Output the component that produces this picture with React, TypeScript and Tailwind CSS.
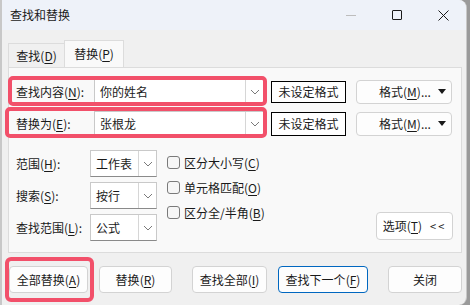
import React from 'react';

const font = { fontFamily: '"Noto Sans CJK SC", "Noto Sans", sans-serif' };

const Key = ({ k }: { k: string }) => (
  <>
    (<span className="underline underline-offset-2">{k}</span>)
  </>
);

const Chevron = () => (
  <svg width="10" height="6" viewBox="0 0 10 6" fill="none" stroke="#7a7a7a" strokeWidth="1">
    <path d="M1 1l4 4 4-4" />
  </svg>
);

const Combo = ({ value, w, h }: { value: string; w: string; h: string }) => (
  <div className={`flex ${w} ${h} border border-[#c9c9c9] border-b-[#8a8a8a] bg-white`}>
    <div className="flex flex-1 items-center pl-[5px] text-[12px]">{value}</div>
    <div className="flex w-[18px] items-center justify-center border-l border-[#d6d6d6]">
      <Chevron />
    </div>
  </div>
);

const Btn = ({ children, w, primary }: { children: React.ReactNode; w: string; primary?: boolean }) => (
  <div
    className={`flex ${w} h-[27px] items-center justify-center rounded-[4px] border bg-[#fdfdfd] text-[12px] ${
      primary ? 'border-[#0067c0]' : 'border-[#d3d3d3]'
    }`}
  >
    {children}
  </div>
);

const FormatBtn = () => (
  <div className="flex h-[24px] w-[96px] items-center justify-between rounded-[4px] border border-[#d3d3d3] bg-[#fdfdfd] pl-[22px] pr-[5px] text-[12px]">
    <span>
      格式<Key k="M" />...
    </span>
    <svg width="8" height="5" viewBox="0 0 8 5">
      <path d="M0 0h8L4 5z" fill="#1a1a1a" />
    </svg>
  </div>
);

const Check = ({ label }: { label: React.ReactNode }) => (
  <div className="flex h-[25px] items-center gap-[4px] text-[12px]">
    <div className="h-[13px] w-[13px] rounded-[3px] border border-[#7a7a7a] bg-[#f6f6f6]" />
    <span>{label}</span>
  </div>
);

export default function App() {
  return (
    <div className="relative flex h-[305px] w-[470px] bg-[#9a9a9a] text-[#1a1a1a]" style={font}>
      <div className="flex h-[305px] w-[467px] flex-col overflow-hidden rounded-r-[8px] border-l-2 border-r border-[#c8c8c8] bg-[#f0f0f0]">
        {/* title bar */}
        <div className="flex h-[30px] items-center bg-[#eef2f9] pl-[8px]">
          <span className="text-[12px]">查找和替换</span>
          <div className="ml-auto flex items-center">
            <div className="flex w-[46px] justify-center">
              <div className="h-px w-[10px] bg-[#bdbdbd]" />
            </div>
            <div className="flex w-[46px] justify-center">
              <div className="h-[10px] w-[10px] rounded-[1px] border border-[#1a1a1a]" />
            </div>
            <div className="flex w-[46px] justify-center">
              <svg width="11" height="11" viewBox="0 0 11 11" stroke="#1a1a1a" strokeWidth="1">
                <path d="M0.5 0.5l10 10M10.5 0.5l-10 10" />
              </svg>
            </div>
          </div>
        </div>

        {/* tabs */}
        <div className="flex h-[37px] items-end pl-[6px]">
          <div className="flex h-[24px] w-[56px] items-center justify-center border-l border-t border-[#dcdcdc] text-[12px]">
            查找<Key k="D" />
          </div>
          <div className="flex h-[27px] w-[60px] items-center justify-center border-x border-t border-[#dcdcdc] bg-[#f9f9f9] text-[12px]">
            替换<Key k="P" />
          </div>
        </div>

        {/* panel */}
        <div className="ml-[6px] mr-[4px] flex h-[186px] flex-col border border-[#dcdcdc] bg-[#f9f9f9] pl-[7px] pt-[11px]">
          <div className="flex h-[25px] items-center">
            <span className="w-[78px] text-[12px]">
              查找内容<Key k="N" />:
            </span>
            <Combo value="你的姓名" w="w-[170px]" h="h-[25px]" />
            <div className="ml-[7px] flex h-[22px] w-[75px] items-center justify-center border border-black bg-white text-[12px]">
              未设定格式
            </div>
            <div className="ml-[10px]">
              <FormatBtn />
            </div>
          </div>
          <div className="mt-[7px] flex h-[25px] items-center">
            <span className="w-[78px] text-[12px]">
              替换为<Key k="E" />:
            </span>
            <Combo value="张根龙" w="w-[170px]" h="h-[25px]" />
            <div className="ml-[7px] flex h-[24px] w-[75px] items-center justify-center border border-black bg-white text-[12px]">
              未设定格式
            </div>
            <div className="ml-[10px]">
              <FormatBtn />
            </div>
          </div>

          <div className="mt-[14px] flex">
            <div className="flex flex-col gap-[5px]">
              <div className="flex items-center">
                <span className="w-[74px] text-[12px]">
                  范围<Key k="H" />:
                </span>
                <Combo value="工作表" w="w-[67px]" h="h-[27px]" />
              </div>
              <div className="flex items-center">
                <span className="w-[74px] text-[12px]">
                  搜索<Key k="S" />:
                </span>
                <Combo value="按行" w="w-[67px]" h="h-[27px]" />
              </div>
              <div className="flex items-center">
                <span className="w-[74px] text-[12px]">
                  查找范围<Key k="L" />:
                </span>
                <Combo value="公式" w="w-[67px]" h="h-[27px]" />
              </div>
            </div>
            <div className="ml-[10px] flex flex-col">
              <Check label={<>区分大小写<Key k="C" /></>} />
              <Check label={<>单元格匹配<Key k="O" /></>} />
              <Check label={<>区分全/半角<Key k="B" /></>} />
            </div>
            <div className="ml-auto mr-[8px] flex items-end pb-[1px]">
              <div className="flex h-[28px] w-[77px] items-center justify-center gap-[8px] rounded-[4px] border border-[#d3d3d3] bg-white text-[12px]">
                <span>
                  选项<Key k="T" />
                </span>
                <span className="text-[11px] tracking-[2px]">&lt;&lt;</span>
              </div>
            </div>
          </div>
        </div>

        {/* bottom buttons */}
        <div className="mt-[13px] flex pl-[7px]">
          <Btn w="w-[79px]">
            全部替换<Key k="A" />
          </Btn>
          <div className="ml-[11px]">
            <Btn w="w-[73px]">
              替换<Key k="R" />
            </Btn>
          </div>
          <div className="ml-[20px]">
            <Btn w="w-[75px]">
              查找全部<Key k="I" />
            </Btn>
          </div>
          <div className="ml-[11px]">
            <Btn w="w-[90px]" primary>
              查找下一个<Key k="F" />
            </Btn>
          </div>
          <div className="ml-[20px]">
            <Btn w="w-[74px]">关闭</Btn>
          </div>
        </div>
      </div>

      {/* red annotation boxes */}
      <div className="absolute left-[8px] top-[76px] h-[30px] w-[259px] rounded-[5px] border-[4px] border-[#f2506a]" />
      <div className="absolute left-[5px] top-[107px] h-[31px] w-[262px] rounded-[5px] border-[4px] border-[#f2506a]" />
      <div className="absolute left-[5px] top-[257px] h-[45px] w-[89px] rounded-[6px] border-[4px] border-[#f2506a]" />
    </div>
  );
}
